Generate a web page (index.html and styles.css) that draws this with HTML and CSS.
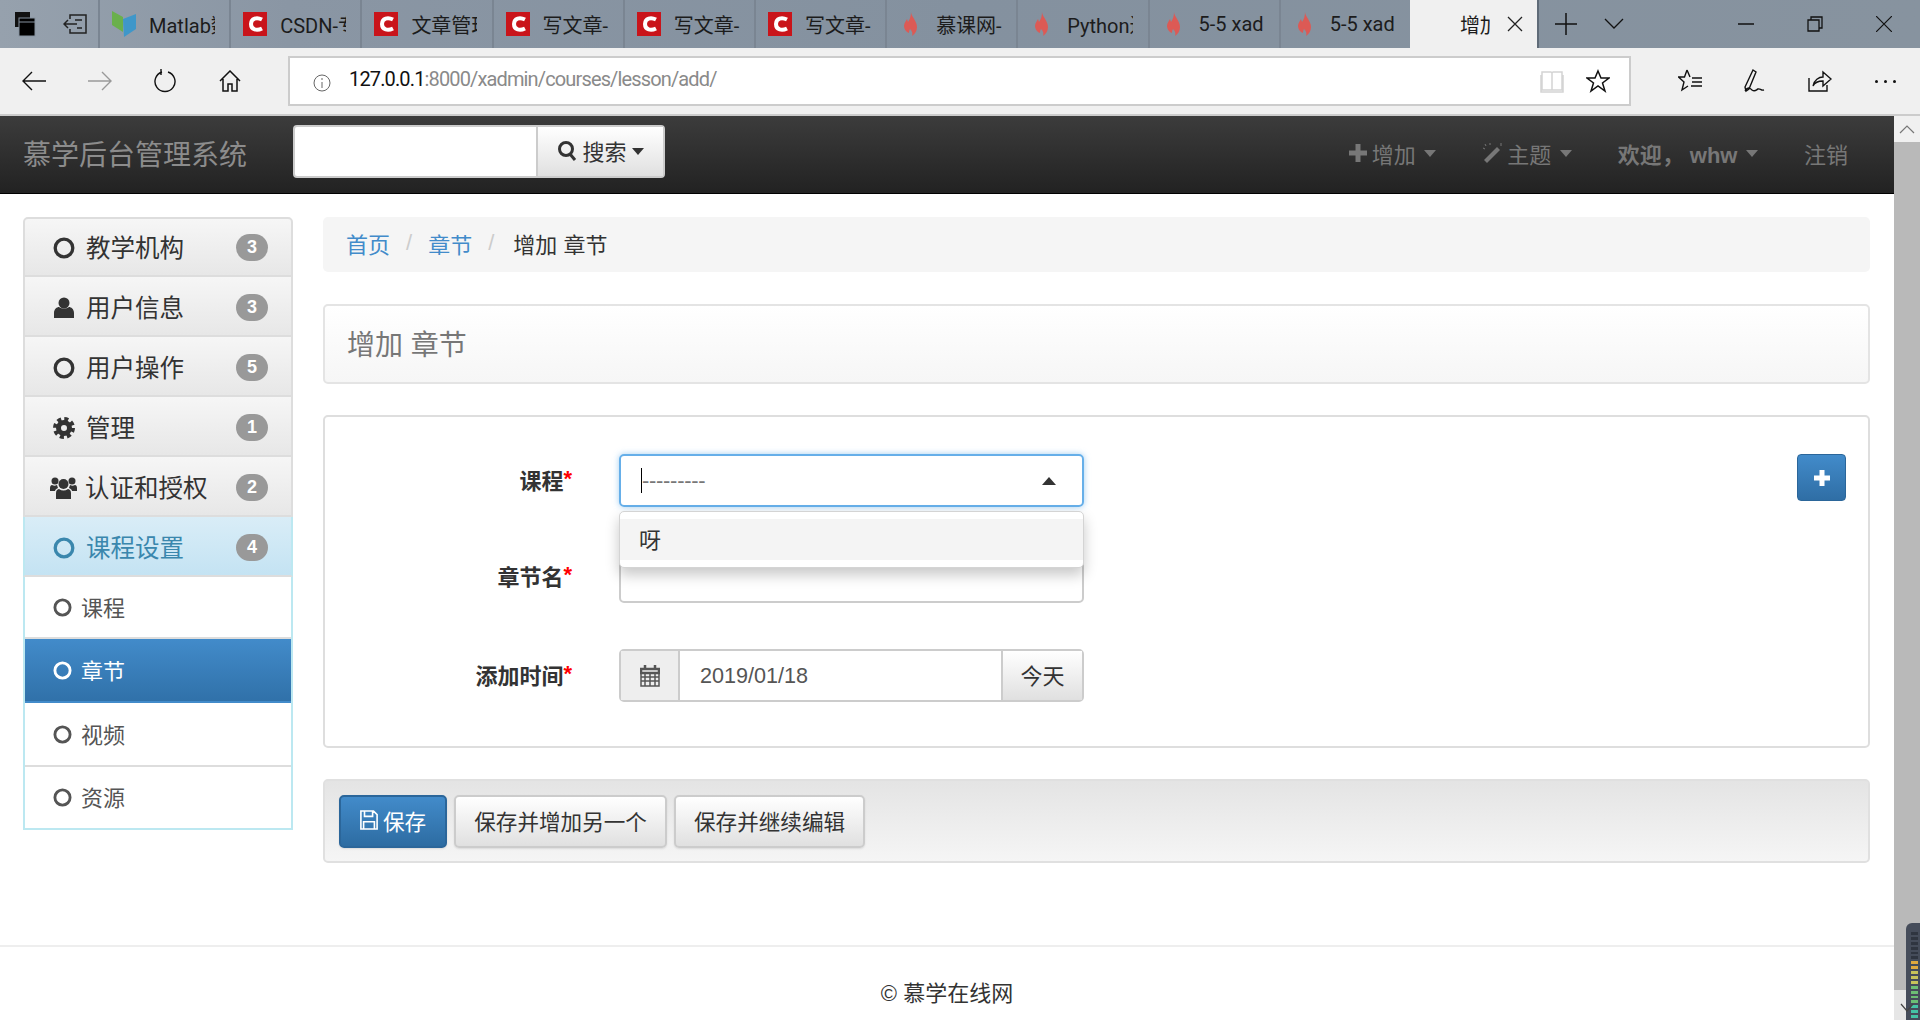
FILE: index.html
```html
<!DOCTYPE html>
<html lang="zh-CN">
<head>
  <meta charset="UTF-8">
  <title>增加 章节</title>
  <link rel="stylesheet" href="styles.css">
</head>
<body>
  <svg class="sprites" width="0" height="0">
    <symbol id="i-csdn" viewBox="0 0 24 24">
      <rect width="24" height="24" fill="#c9141a"/>
      <path d="M19 7.500c-5-2.500-11-1.500-11 4.500s6 7 11 4.500" fill="none" stroke="#fff" stroke-width="4"/>
    </symbol>
    <symbol id="i-flame" viewBox="0 0 16 24">
      <path d="M8 0c0 4 6 9 6 15 0 4-2 7-5 9 1-3 0-5-2-7-1 2-1 3-1 4-3-1-5-4-5-7 0-3 2-5 3-7l1 3c2-3 3-6 3-10z" fill="#dc5a55"/>
    </symbol>
    <symbol id="i-circle" viewBox="0 0 20 20">
      <circle cx="10" cy="10" r="8" fill="none" stroke="currentColor" stroke-width="3"/>
    </symbol>
    <symbol id="i-caret" viewBox="0 0 12 7">
      <path d="M0 0h12L6 7z" fill="currentColor"/>
    </symbol>
  </svg>

  <div class="tabstrip">
    <div class="tab-tools">
      <svg width="22" height="26" viewBox="0 0 22 26"><rect x="1" y="1" width="15" height="15" fill="#111"/><rect x="5" y="7" width="16" height="18" fill="#000" stroke="#86929f"/><path d="M5 11h16" stroke="#86929f"/></svg>
      <svg width="24" height="20" viewBox="0 0 24 20" fill="none" stroke="#222" stroke-width="1.500"><path d="M7 5V1h16v18H7v-4M1 10h13M5 6l-4 4 4 4M12 6h7M14 14h5"/></svg>
    </div>
    <div class="tab"><svg class="tab-icon" width="24" height="28" viewBox="0 0 24 28"><path d="M0 1l11 6v15L0 15z" fill="#6ab04c"/><path d="M11 9l13-5v15l-12 8z" fill="#3f97c9"/></svg><span class="tab-text">Matlab数据</span></div>
    <div class="tab"><svg class="tab-icon" width="24" height="24"><use href="#i-csdn"/></svg><span class="tab-text">CSDN-专业</span></div>
    <div class="tab"><svg class="tab-icon" width="24" height="24"><use href="#i-csdn"/></svg><span class="tab-text">文章管理</span></div>
    <div class="tab"><svg class="tab-icon" width="24" height="24"><use href="#i-csdn"/></svg><span class="tab-text">写文章-</span></div>
    <div class="tab"><svg class="tab-icon" width="24" height="24"><use href="#i-csdn"/></svg><span class="tab-text">写文章-</span></div>
    <div class="tab"><svg class="tab-icon" width="24" height="24"><use href="#i-csdn"/></svg><span class="tab-text">写文章-</span></div>
    <div class="tab tab-flame"><svg class="tab-icon" width="16" height="24"><use href="#i-flame"/></svg><span class="tab-text">慕课网-</span></div>
    <div class="tab tab-flame"><svg class="tab-icon" width="16" height="24"><use href="#i-flame"/></svg><span class="tab-text">Python进阶</span></div>
    <div class="tab tab-flame"><svg class="tab-icon" width="16" height="24"><use href="#i-flame"/></svg><span class="tab-text">5-5 xad</span></div>
    <div class="tab tab-flame"><svg class="tab-icon" width="16" height="24"><use href="#i-flame"/></svg><span class="tab-text">5-5 xad</span></div>
    <div class="tab-active">
      <span class="tab-active-text">增加</span>
      <svg width="16" height="16" viewBox="0 0 16 16" stroke="#222" stroke-width="1.300"><path d="M1 1l14 14M15 1L1 15"/></svg>
    </div>
    <div class="tab-actions">
      <svg width="22" height="22" viewBox="0 0 22 22" stroke="#111" stroke-width="1.500"><path d="M11 0v22M0 11h22"/></svg>
      <svg width="20" height="12" viewBox="0 0 20 12" fill="none" stroke="#111" stroke-width="1.300"><path d="M1 1l9 9 9-9"/></svg>
    </div>
    <div class="window-buttons">
      <svg width="16" height="2" viewBox="0 0 16 2" stroke="#111" stroke-width="1.500"><path d="M0 1h16"/></svg>
      <svg width="16" height="16" viewBox="0 0 16 16" fill="none" stroke="#111" stroke-width="1.300"><path d="M1 4h11v11H1zM4 4V1h11v11h-3"/></svg>
      <svg width="16" height="16" viewBox="0 0 16 16" stroke="#111" stroke-width="1.200"><path d="M0 0l16 16M16 0L0 16"/></svg>
    </div>
  </div>

  <div class="toolbar">
    <div class="nav-icons">
      <svg width="24" height="20" viewBox="0 0 24 20" fill="none" stroke="#111" stroke-width="1.400"><path d="M24 10H1M10 1l-9 9 9 9"/></svg>
      <svg width="24" height="20" viewBox="0 0 24 20" fill="none" stroke="#999" stroke-width="1.400"><path d="M0 10h23M14 1l9 9-9 9"/></svg>
      <svg width="22" height="24" viewBox="0 0 22 24" fill="none" stroke="#111" stroke-width="1.400"><path d="M14 3a10 10 0 1 1-6 0M7 0v6"/></svg>
      <svg width="22" height="22" viewBox="0 0 22 22" fill="none" stroke="#111" stroke-width="1.500"><path d="M1 11L11 1l10 10M4 9v12h5v-7h4v7h5V9"/></svg>
    </div>
    <div class="address">
      <svg class="info-icon" width="18" height="18" viewBox="0 0 18 18" fill="none" stroke="#666"><circle cx="9" cy="9" r="8"/><path d="M9 8v6M9 4v2"/></svg>
      <span class="url"><b>127.0.0.1</b>:8000/xadmin/courses/lesson/add/</span>
      <svg class="book-icon" width="24" height="24" viewBox="0 0 24 24" fill="none" stroke="#d4d4d4" stroke-width="1.500"><path d="M2 3h9l1 1 1-1h9v18H2zM12 4v17M1 6v17h22V6"/></svg>
      <svg width="24" height="24" viewBox="0 0 24 24" fill="none" stroke="#111" stroke-width="1.500"><path d="M12 2l3 7h8l-6.500 5 2.500 8-7-5-7 5 2.500-8L1 9h8z"/></svg>
    </div>
    <div class="browser-tools">
      <svg width="24" height="24" viewBox="0 0 24 24" fill="none" stroke="#111" stroke-width="1.400"><path d="M9 1L6.500 8H.5L6 13l-2 8 6-4M9 1l3 7M14 9h10M14 13h10M13 17h11"/></svg>
      <svg width="24" height="26" viewBox="0 0 24 26" fill="none" stroke="#111" stroke-width="1.400"><path d="M10 2l3 2-7 17-3 2-1-4zM2 23c3-5 5-3 7-1 3 2 4 0 6-1 2-1 3 2 6 1"/></svg>
      <svg width="24" height="24" viewBox="0 0 24 24" fill="none" stroke="#111" stroke-width="1.400"><path d="M1 9v13h18v-6M5 17c1-6 6-9 10-9V3l8 7-8 7v-5c-4 0-8 1-10 5z"/></svg>
      <div class="more-dots"><span></span><span></span><span></span></div>
    </div>
  </div>

  <div class="viewport">
    <div class="page">
      <div class="navbar">
        <div class="brand">慕学后台管理系统</div>
        <div class="search">
          <div class="search-input"></div>
          <div class="search-btn">
            <svg width="20" height="22" viewBox="0 0 20 22" fill="none" stroke="#333" stroke-width="3"><circle cx="9" cy="9" r="6.500"/><path d="M13 14l5 6"/></svg>
            <span>搜索</span>
            <svg width="12" height="7"><use href="#i-caret"/></svg>
          </div>
        </div>
        <div class="nav-right">
          <div class="nav-link">
            <svg width="18" height="18" viewBox="0 0 18 18" fill="currentColor"><path d="M6.500 0h5v6.500H18v5h-6.500V18h-5v-6.500H0v-5h6.500z"/></svg>
            增加
            <svg class="caret" width="12" height="7"><use href="#i-caret"/></svg>
          </div>
          <div class="nav-link">
            <svg width="20" height="22" viewBox="0 0 20 22" fill="currentColor"><path d="M15 5l3 3L5 21l-3-3z"/><path d="M3 2l1 2M8 1v2M1 6l2 1M19 1v3" stroke="currentColor"/></svg>
            主题
            <svg class="caret" width="12" height="7"><use href="#i-caret"/></svg>
          </div>
          <div class="nav-link nav-user">
            欢迎， whw
            <svg class="caret" width="12" height="7"><use href="#i-caret"/></svg>
          </div>
          <div class="nav-link">注销</div>
        </div>
      </div>

      <div class="content">
        <aside class="sidebar">
          <div class="menu-item">
            <svg width="22" height="22"><use href="#i-circle"/></svg>
            <span class="menu-text">教学机构</span><span class="badge">3</span>
          </div>
          <div class="menu-item">
            <svg width="22" height="22" viewBox="0 0 22 22" fill="currentColor"><circle cx="11" cy="6" r="5.500"/><path d="M1 21v-5c0-4 3-6 5-6 3 2 7 2 10 0 2 0 5 2 5 6v5z"/></svg>
            <span class="menu-text">用户信息</span><span class="badge">3</span>
          </div>
          <div class="menu-item">
            <svg width="22" height="22"><use href="#i-circle"/></svg>
            <span class="menu-text">用户操作</span><span class="badge">5</span>
          </div>
          <div class="menu-item">
            <svg width="22" height="22" viewBox="0 0 22 22" fill="none" stroke="currentColor"><circle cx="11" cy="11" r="5.500" stroke-width="5"/><circle cx="11" cy="11" r="9" stroke-width="4" stroke-dasharray="4 3.070"/></svg>
            <span class="menu-text">管理</span><span class="badge">1</span>
          </div>
          <div class="menu-item">
            <svg class="icon-group" width="27" height="24" viewBox="0 0 27 24" fill="currentColor"><circle cx="13.500" cy="8" r="5"/><circle cx="5" cy="5" r="3.500"/><circle cx="22" cy="5" r="3.500"/><path d="M6 23v-6c0-3 2-4 3-4 3 2 6 2 9 0 1 0 3 1 3 4v6zM0 15v-3c0-2 1-3 2-3 2 1 3 1 5 0l1 3c-2 1-3 2-3 3zM27 15v-3c0-2-1-3-2-3-2 1-3 1-5 0l-1 3c2 1 3 2 3 3z"/></svg>
            <span class="menu-text">认证和授权</span><span class="badge">2</span>
          </div>
          <div class="menu-item menu-open">
            <svg width="22" height="22"><use href="#i-circle"/></svg>
            <span class="menu-text">课程设置</span><span class="badge">4</span>
          </div>
          <div class="submenu">
            <div class="sub-item sub-first"><svg width="19" height="19"><use href="#i-circle"/></svg><span>课程</span></div>
            <div class="sub-item sub-active"><svg width="19" height="19"><use href="#i-circle"/></svg><span>章节</span></div>
            <div class="sub-item"><svg width="19" height="19"><use href="#i-circle"/></svg><span>视频</span></div>
            <div class="sub-item sub-last"><svg width="19" height="19"><use href="#i-circle"/></svg><span>资源</span></div>
          </div>
        </aside>

        <main class="main">
          <div class="breadcrumb">
            <a>首页</a><span class="sep">/</span><a>章节</a><span class="sep">/</span><span class="crumb-last">增加 章节</span>
          </div>
          <div class="title-box">增加 章节</div>
          <div class="form-box">
            <div class="form-row">
              <label class="form-label">课程<i>*</i></label>
              <div class="field">
                <div class="select-open">
                  <span class="cursor"></span><span class="select-value">---------</span>
                  <span class="select-arrow"></span>
                </div>
                <div class="dropdown"><div class="dropdown-item">呀</div></div>
              </div>
              <div class="add-btn">
                <svg width="16" height="16" viewBox="0 0 16 16" fill="#fff"><path d="M5.500 0h5v5.500H16v5h-5.500V16h-5v-5.500H0v-5h5.500z"/></svg>
              </div>
            </div>
            <div class="form-row form-row-wide">
              <label class="form-label">章节名<i>*</i></label>
              <div class="field"><div class="text-input"></div></div>
            </div>
            <div class="form-row form-row-last">
              <label class="form-label">添加时间<i>*</i></label>
              <div class="field date-group">
                <div class="date-addon">
                  <svg width="20" height="22" viewBox="0 0 20 22" fill="none" stroke="#555" stroke-width="1.500"><path d="M1 4h18v17H1zM1 8h18M1 12h18M1 16h18M5 8v13M10 8v13M15 8v13"/><path d="M1 4h18v4H1zM5 0v5M15 0v5" stroke-width="2.500"/></svg>
                </div>
                <div class="date-input">2019/01/18</div>
                <div class="date-today">今天</div>
              </div>
            </div>
          </div>
          <div class="save-bar">
            <div class="btn btn-primary">
              <svg width="18" height="20" viewBox="0 0 20 22" fill="none" stroke="#fff" stroke-width="1.800"><path d="M1 1h14l4 4v16H1zM5 1v6h9V1M4 21v-8h12v8"/></svg>
              保存
            </div>
            <div class="btn">保存并增加另一个</div>
            <div class="btn">保存并继续编辑</div>
          </div>
        </main>
      </div>

      <div class="footer">© 慕学在线网</div>
    </div>

    <div class="scrollbar">
      <div class="scroll-up"><svg width="16" height="9" viewBox="0 0 16 9" fill="none" stroke="#777" stroke-width="1.200"><path d="M1 8l7-7 7 7"/></svg></div>
      <div class="scroll-thumb"></div>
      <div class="scroll-down"></div>
    </div>

    <div class="meter">
      <span class="led led-off"></span><span class="led led-off"></span><span class="led led-off"></span>
      <span class="led led-off"></span><span class="led led-off"></span><span class="led led-off"></span>
      <span class="led led-o"></span><span class="led led-o"></span><span class="led led-y"></span>
      <span class="led led-y"></span><span class="led led-y"></span><span class="led led-g"></span>
      <span class="led led-g"></span><span class="led led-g"></span><span class="led led-g"></span>
      <span class="led led-t"></span><span class="led led-t"></span><span class="led led-t"></span>
    </div>
    <svg class="scroll-check" width="14" height="9" viewBox="0 0 14 9" fill="none" stroke="#444" stroke-width="1.200"><path d="M1 1l6 7 6-7"/></svg>
  </div>
</body>
</html>
```

FILE: styles.css
```css
* {
  box-sizing: border-box;
}

html,
body {
  height: 100%;
}

body {
  margin: 0;
  height: 1020px;
  overflow: hidden;
  display: flex;
  flex-direction: column;
  background-color: #ffffff;
  color: #333333;
  font-family: "Liberation Sans", "Noto Sans CJK SC", sans-serif;
  font-size: 22px;
}

.sprites {
  display: none;
}

svg {
  flex: none;
}

/* browser chrome */
.tabstrip {
  display: flex;
  align-items: stretch;
  height: 48px;
  background: linear-gradient(90deg, #96a1ad 0, #8a96a4 15%, #84919f 50%, #87939f 100%);
  font-family: Roboto, "Noto Sans CJK SC", sans-serif;
  font-size: 20px;
  color: #1c1c1c;
}

.tab-tools {
  width: 98px;
  flex: none;
  display: flex;
  align-items: center;
  gap: 27px;
  padding-left: 14px;
}

.tab {
  width: 131.2px;
  flex: none;
  display: flex;
  align-items: center;
  border-left: 2px solid #7a8592;
}

.tab:first-of-type {
  border-left-color: #4a5563;
}

.tab-icon {
  margin-left: 12px;
}

.tab-text {
  width: 66px;
  margin-left: 13px;
  white-space: nowrap;
  overflow: hidden;
}

.tab-flame .tab-icon {
  margin-left: 16px;
}

.tab-flame .tab-text {
  margin-left: 17px;
}

.tab-active {
  width: 129px;
  flex: none;
  display: flex;
  align-items: center;
  gap: 17px;
  padding-left: 50px;
  background-color: #f0f0f0;
  border-right: 2px solid #5f6b78;
}

.tab-active-text {
  width: 30px;
  overflow: hidden;
  white-space: nowrap;
}

.tab-actions {
  flex: none;
  display: flex;
  align-items: center;
  gap: 27px;
  padding-left: 16px;
}

.window-buttons {
  margin-left: auto;
  display: flex;
  align-items: center;
  gap: 53px;
  padding-right: 28px;
}

.toolbar {
  height: 68px;
  display: flex;
  align-items: center;
  background-color: #f0f0f0;
  border-bottom: 2px solid #cccccc;
}

.nav-icons {
  width: 288px;
  flex: none;
  display: flex;
  align-items: center;
  gap: 42px;
  padding-left: 22px;
}

.nav-icons svg:last-child {
  margin-left: 1px;
}

.address {
  width: 1343px;
  height: 50px;
  flex: none;
  display: flex;
  align-items: center;
  background-color: #ffffff;
  border: 2px solid #cccccc;
  padding: 0 19px 0 23px;
}

.info-icon {
  margin-top: 4px;
}

.url {
  margin-left: 18px;
  margin-top: -4px;
  font-family: Roboto, sans-serif;
  font-size: 20px;
  letter-spacing: -0.86px;
  color: #8a8a8a;
}

.url b {
  font-weight: 400;
  color: #111111;
}

.book-icon {
  margin-left: auto;
  margin-right: 22px;
}

.browser-tools {
  flex: 1;
  display: flex;
  align-items: center;
  gap: 41px;
  padding-left: 47px;
}

.more-dots {
  display: flex;
  gap: 6px;
  margin-left: 2px;
}

.more-dots span {
  width: 3px;
  height: 3px;
  background-color: #111111;
  border-radius: 50%;
}

/* page */
.viewport {
  flex: 1;
  display: flex;
  position: relative;
  min-height: 0;
}

.page {
  flex: 1;
  display: flex;
  flex-direction: column;
  min-width: 0;
}

.scrollbar {
  width: 26px;
  display: flex;
  flex-direction: column;
  background-color: #b9b9b9;
}

.scroll-up {
  height: 26px;
  display: flex;
  align-items: center;
  justify-content: center;
  background-color: #f0f0f0;
}

.scroll-thumb {
  flex: 1;
}

.scroll-down {
  height: 30px;
  background-color: #e6e6e6;
}

.meter {
  position: absolute;
  right: 0;
  bottom: 0;
  width: 14px;
  height: 97px;
  padding: 9px 0 0 5px;
  background-color: #454c5a;
  border-radius: 6px 0 0 0;
  display: flex;
  flex-direction: column;
  gap: 2px;
}

.led {
  width: 7px;
  height: 2.900px;
}

.led-off { background-color: #2f3540; }
.led-o { background-color: #e0a93e; }
.led-y { background-color: #c6c35a; }
.led-g { background-color: #6cbf74; }
.led-t { background-color: #45c3a4; }

.scroll-check {
  position: absolute;
  right: 6px;
  bottom: 8px;
}

.navbar {
  height: 78px;
  display: flex;
  align-items: center;
  padding: 0 46px 0 23px;
  background: linear-gradient(#3c3c3c, #222222);
  border-bottom: 1px solid #000000;
  color: #777777;
}

.brand {
  width: 270px;
  padding-bottom: 4px;
  font-size: 28px;
  color: #8c8c8c;
}

.search {
  width: 372px;
  height: 53px;
  margin-bottom: 7px;
  display: flex;
  background-color: #ffffff;
  border: 2px solid #cccccc;
  border-radius: 4px;
  color: #333333;
}

.search-input {
  flex: 1;
}

.search-btn {
  width: 127px;
  display: flex;
  align-items: center;
  justify-content: center;
  gap: 5px;
  background: linear-gradient(#ffffff, #e0e0e0);
  border-left: 2px solid #cccccc;
}

.search-btn span {
  padding-bottom: 3px;
}

.nav-right {
  margin-left: auto;
  display: flex;
  align-items: center;
  gap: 46px;
}

.nav-link {
  display: flex;
  align-items: center;
  gap: 5px;
  padding-bottom: 3px;
}

.caret {
  margin-left: 3.500px;
}

.nav-user {
  font-weight: 700;
}

.content {
  display: flex;
  gap: 30px;
  padding: 23px 24px 0 23px;
}

.sidebar {
  width: 270px;
  height: 613px;
  flex: none;
}

.menu-item {
  height: 60px;
  display: flex;
  align-items: center;
  padding: 3px 23px 0 28px;
  background: linear-gradient(#f6f6f6, #e7e7e7);
  border: 2px solid #dddddd;
  border-top: 0;
  font-size: 24.500px;
}

.menu-item:first-child {
  padding-top: 1px;
  border-top: 2px solid #dddddd;
  border-radius: 5px 5px 0 0;
}

.menu-item svg {
  margin-right: 11px;
}

.menu-item .icon-group {
  margin: 0 8px 0 -3px;
}

.menu-text {
  flex: 1;
  white-space: nowrap;
  padding-bottom: 2px;
}

.badge {
  width: 32px;
  height: 27px;
  flex: none;
  display: flex;
  align-items: center;
  justify-content: center;
  background-color: #999999;
  border-radius: 14px;
  color: #ffffff;
  font-size: 18px;
  font-weight: 700;
}

.menu-open {
  background: linear-gradient(#d9edf7, #c4e3f3);
  border-color: #bce8f1;
  border-bottom-color: #dddddd;
  color: #3a87ad;
}

.submenu {
  border: 2px solid #bce8f1;
  border-top: 0;
  background-color: #ffffff;
  color: #555555;
}

.sub-item {
  height: 64px;
  display: flex;
  align-items: center;
  gap: 9px;
  padding-left: 28px;
  border-bottom: 2px solid #dddddd;
}

.sub-item span {
  padding-bottom: 3px;
}

.sub-first {
  height: 62px;
}

.sub-last {
  height: 61px;
  border-bottom: 0;
}

.sub-active {
  background: linear-gradient(#428bca, #3071a9);
  color: #ffffff;
  border-bottom-color: #428bca;
}

.main {
  flex: 1;
  min-width: 0;
  display: flex;
  flex-direction: column;
}

.breadcrumb {
  height: 55px;
  display: flex;
  align-items: center;
  padding: 0 0 3px 23px;
  background-color: #f5f5f5;
  border-radius: 5px;
}

.breadcrumb a {
  color: #428bca;
}

.sep {
  margin: 0 16px;
  color: #cccccc;
}

.crumb-last {
  margin-left: 3px;
}

.title-box {
  height: 80px;
  margin-top: 32px;
  display: flex;
  align-items: center;
  padding: 0 0 3px 22px;
  background: linear-gradient(#ffffff, #f6f6f6);
  border: 2px solid #e4e4e4;
  border-radius: 5px;
  color: #777777;
  font-size: 28px;
}

.form-box {
  height: 333px;
  margin-top: 31px;
  padding: 37px 22px 0 0;
  border: 2px solid #dedede;
  border-radius: 5px;
}

.form-row {
  display: flex;
  margin-bottom: 43px;
}

.form-row-wide {
  margin-bottom: 46px;
}

.form-row-last {
  margin-bottom: 0;
}

.form-label {
  width: 247px;
  margin-right: 47px;
  display: flex;
  align-items: center;
  justify-content: flex-end;
  padding-bottom: 3px;
  font-weight: 700;
}

.form-label i {
  color: #ff0000;
  font-style: normal;
}

.field {
  width: 465px;
  height: 53px;
  position: relative;
}

.select-open {
  height: 53px;
  display: flex;
  align-items: center;
  padding-left: 20px;
  border: 2px solid #66afe9;
  border-radius: 5px;
  box-shadow: 0 0 6px rgba(102, 175, 233, 0.6);
}

.cursor {
  width: 1px;
  height: 25px;
  background-color: #000000;
}

.select-value {
  color: #777777;
  font-size: 22px;
  letter-spacing: -0.3px;
}

.select-arrow {
  margin-left: auto;
  margin-right: 26px;
  border-left: 7px solid transparent;
  border-right: 7px solid transparent;
  border-bottom: 8px solid #333333;
}

.dropdown {
  position: absolute;
  z-index: 2;
  left: 0;
  right: 0;
  top: 57px;
  height: 57px;
  padding: 7px 0;
  background-color: #ffffff;
  border: 1px solid #d4d4d4;
  border-radius: 5px;
  box-shadow: 0 7px 14px rgba(0, 0, 0, 0.22);
}

.dropdown-item {
  height: 41px;
  display: flex;
  align-items: center;
  padding: 0 0 3px 19px;
  background-color: #f4f4f4;
}

.add-btn {
  width: 49px;
  height: 47px;
  margin-left: auto;
  display: flex;
  align-items: center;
  justify-content: center;
  background: linear-gradient(#428bca, #2f6ea5);
  border: 1px solid #2b669a;
  border-radius: 4px;
}

.text-input {
  height: 53px;
  border: 2px solid #cccccc;
  border-radius: 5px;
}

.date-group {
  display: flex;
  border: 2px solid #cccccc;
  border-radius: 5px;
}

.date-addon {
  width: 59px;
  display: flex;
  align-items: center;
  justify-content: center;
  background-color: #eeeeee;
  border-right: 2px solid #cccccc;
}

.date-input {
  flex: 1;
  display: flex;
  align-items: center;
  padding-left: 20px;
  color: #555555;
  font-size: 21.600px;
}

.date-today {
  width: 81px;
  display: flex;
  align-items: center;
  justify-content: center;
  padding-bottom: 3px;
  background: linear-gradient(#ffffff, #e0e0e0);
  border-left: 2px solid #cccccc;
}

.save-bar {
  height: 84px;
  margin-top: 31px;
  display: flex;
  align-items: flex-start;
  gap: 7px;
  padding: 14px 0 0 14px;
  background: linear-gradient(#e4e4e4, #f5f5f5);
  border: 2px solid #e0e0e0;
  border-radius: 5px;
}

.btn {
  height: 53px;
  display: flex;
  align-items: center;
  gap: 5px;
  padding: 0 18px 3px;
  background: linear-gradient(#ffffff, #e0e0e0);
  border: 2px solid #cccccc;
  border-radius: 5px;
  box-shadow: 0 1px 2px rgba(0, 0, 0, 0.1);
  font-size: 21.600px;
}

.btn-primary {
  padding: 0 19px 3px;
  background: linear-gradient(#428bca, #2d6ca2);
  border-color: #2b669a;
  color: #ffffff;
}

.footer {
  margin-top: 82px;
  height: 75px;
  padding-top: 28px;
  border-top: 2px solid #eeeeee;
  text-align: center;
}
```
